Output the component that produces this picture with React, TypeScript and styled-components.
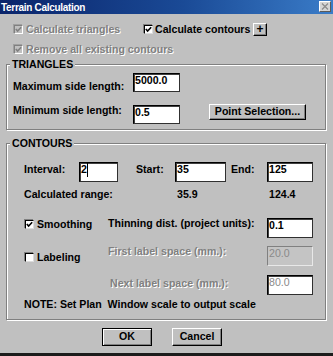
import React from "react";
import styled, { createGlobalStyle } from "styled-components";

const GlobalStyle = createGlobalStyle`
  html, body {
    margin: 0;
    padding: 0;
    background: #c0c0c0;
  }
  body {
    font-family: "Liberation Sans", Arial, sans-serif;
  }
`;

const Window = styled.div`
  width: 333px;
  height: 356px;
  box-sizing: border-box;
  background: #c0c0c0;
  border-bottom: 3px solid #1c1c1c;
  display: flex;
  flex-direction: column;
  font-family: "Liberation Sans", Arial, sans-serif;
  font-size: 10.6px;
  font-weight: bold;
  color: #000;
  overflow: hidden;
`;

const TitleBar = styled.div`
  height: 14px;
  flex: none;
  display: flex;
  align-items: flex-start;
  justify-content: space-between;
  padding: 0 2px 0 1px;
  background: linear-gradient(to right, #0a246a 0%, #1a4a96 55%, #3a7cc8 100%);
`;

const Title = styled.span`
  margin-top: 1px;
  color: #fff;
  font-size: 10px;
  letter-spacing: -0.3px;
  line-height: 14px;
  white-space: nowrap;
`;

const CloseBox = styled.div`
  width: 12px;
  height: 11px;
  margin-top: 1px;
  box-sizing: border-box;
  background: #d6d6d6;
  border: 1px solid;
  border-color: #fff #5a5a5a #5a5a5a #fff;
  display: flex;
  align-items: center;
  justify-content: center;
`;

const Options = styled.div`
  display: flex;
  flex-direction: column;
  gap: 7px;
  padding: 9px 0 0 13px;
`;

const OptionRow = styled.div`
  display: flex;
  align-items: center;
  height: 13px;
`;

const CheckItem = styled.label<{ $w?: number; $gap: number; $dy?: number }>`
  display: flex;
  align-items: center;
  flex: none;
  gap: ${(p) => p.$gap}px;
  width: ${(p) => (p.$w ? `${p.$w}px` : "auto")};
  height: 13px;
  margin-top: ${(p) => p.$dy || 0}px;
  line-height: 13px;
`;

const Box = styled.span<{ $disabled?: boolean }>`
  width: 9px;
  height: 9px;
  margin-left: 1px;
  box-sizing: border-box;
  flex: none;
  display: flex;
  align-items: center;
  justify-content: center;
  background: ${(p) => (p.$disabled ? "#c0c0c0" : "#fff")};
  border: 1px solid;
  border-color: ${(p) =>
    p.$disabled ? "#808080 #fff #fff #808080" : "#000 #dcdcdc #dcdcdc #000"};
  box-shadow: -1px -1px 0 ${(p) => (p.$disabled ? "#a0a0a0" : "#808080")};
`;

const Text = styled.span<{ $disabled?: boolean }>`
  white-space: pre;
  color: ${(p) => (p.$disabled ? "#808080" : "#000")};
  text-shadow: ${(p) => (p.$disabled ? "1px 1px 0 #fff" : "none")};
`;

const Group = styled.fieldset<{ $mt: number; $pad: string }>`
  flex: none;
  min-width: 0;
  margin: ${(p) => p.$mt}px 7px 0 6px;
  padding: ${(p) => p.$pad};
  border: 1px solid #808080;
  box-shadow: inset 1px 1px 0 #fff, 1px 1px 0 #fff;
`;

const Legend = styled.legend`
  padding: 0 2px;
  line-height: 13px;
  background: #c0c0c0;
`;

const FormRow = styled.div<{ $mt?: number; $pl?: number }>`
  display: flex;
  align-items: flex-start;
  margin-top: ${(p) => p.$mt || 0}px;
  padding-left: ${(p) => p.$pl || 0}px;
`;

const Label = styled.span<{ $w?: number; $dy?: number; $ml?: number; $disabled?: boolean }>`
  display: block;
  flex: none;
  width: ${(p) => (p.$w ? `${p.$w}px` : "auto")};
  margin-top: ${(p) => p.$dy || 0}px;
  margin-left: ${(p) => p.$ml || 0}px;
  line-height: 13px;
  white-space: pre;
  color: ${(p) => (p.$disabled ? "#808080" : "#000")};
  text-shadow: ${(p) => (p.$disabled ? "1px 1px 0 #fff" : "none")};
`;

type FieldState = "normal" | "grayed" | "dimmed";

const Field = styled.div<{ $w: number; $h: number; $dy?: number; $state?: FieldState }>`
  flex: none;
  box-sizing: border-box;
  width: ${(p) => p.$w}px;
  height: ${(p) => p.$h}px;
  margin-top: ${(p) => p.$dy || 0}px;
  padding: 0 1px;
  line-height: 12px;
  display: flex;
  align-items: flex-start;
  border: 1px solid;
  border-color: ${(p) =>
    p.$state === "grayed" ? "#808080 #e8e8e8 #e8e8e8 #808080" : "#000 #303030 #303030 #000"};
  box-shadow: ${(p) => (p.$state === "grayed" ? "none" : "inset 1px 1px 0 #404040")};
  background: ${(p) => (p.$state === "grayed" ? "#c4c4c4" : "#fff")};
  color: ${(p) => (p.$state && p.$state !== "normal" ? "#8a8a8a" : "#000")};
  font-weight: ${(p) => (p.$state && p.$state !== "normal" ? "normal" : "bold")};
`;

const Caret = styled.span`
  width: 1px;
  height: 14px;
  background: #000;
`;

const Button = styled.button<{ $w: number; $h: number; $dy?: number; $ml?: number; $default?: boolean }>`
  flex: none;
  box-sizing: border-box;
  width: ${(p) => p.$w}px;
  height: ${(p) => p.$h}px;
  margin: ${(p) => p.$dy || 0}px 0 0 ${(p) => p.$ml || 0}px;
  padding: 0 0 1px;
  font: inherit;
  line-height: 13px;
  color: #000;
  background: #c0c0c0;
  border: 1px solid;
  border-color: ${(p) => (p.$default ? "#000" : "#fff #000 #000 #fff")};
  box-shadow: ${(p) =>
    p.$default
      ? "inset 1px 1px 0 #fff, inset -1px -1px 0 #808080"
      : "inset -1px -1px 0 #808080"};
  cursor: default;
`;

const PlusButton = styled(Button)`
  font-size: 12px;
  line-height: 11px;
  padding: 0;
`;

const ButtonRow = styled.div`
  display: flex;
  gap: 20px;
  padding-left: 102px;
  margin-top: 8px;
`;

const Check = ({ checked, disabled }: { checked?: boolean; disabled?: boolean }) => (
  <Box $disabled={disabled}>
    {checked && (
      <svg width="7" height="7" viewBox="0 0 7 7">
        <polyline
          points="0.8,3 2.6,5 6.2,1.2"
          fill="none"
          stroke={disabled ? "#808080" : "#000"}
          strokeWidth="1.6"
        />
      </svg>
    )}
  </Box>
);

export default function App() {
  return (
    <>
      <GlobalStyle />
      <Window>
        <TitleBar>
          <Title>Terrain Calculation</Title>
          <CloseBox>
            <svg width="8" height="7" viewBox="0 0 8 7">
              <path d="M1 0.5 L7 6.5 M7 0.5 L1 6.5" stroke="#8c8c8c" strokeWidth="1.3" />
            </svg>
          </CloseBox>
        </TitleBar>

        <Options>
          <OptionRow>
            <CheckItem $w={130} $gap={3}>
              <Check checked disabled />
              <Text $disabled>Calculate triangles</Text>
            </CheckItem>
            <CheckItem $w={110} $gap={2}>
              <Check checked />
              <Text>Calculate contours</Text>
            </CheckItem>
            <PlusButton $w={14} $h={13}>+</PlusButton>
          </OptionRow>
          <OptionRow>
            <CheckItem $gap={3}>
              <Check checked disabled />
              <Text $disabled>Remove all existing contours</Text>
            </CheckItem>
          </OptionRow>
        </Options>

        <Group $mt={2} $pad="2px 6px 5px 3px">
          <Legend>TRIANGLES</Legend>
          <FormRow $pl={3}>
            <Label $w={120} $dy={7}>Maximum side length:</Label>
            <Field $w={47} $h={19}>5000.0</Field>
          </FormRow>
          <FormRow $pl={3} $mt={11}>
            <Label $w={120}>Minimum side length:</Label>
            <Field $w={47} $h={19} $dy={1}>0.5</Field>
            <Button $w={97} $h={16} $ml={29}>Point Selection...</Button>
          </FormRow>
        </Group>

        <Group $mt={7} $pad="12px 6px 8px 3px">
          <Legend>CONTOURS</Legend>
          <FormRow $pl={14}>
            <Label $w={55} $dy={1}>Interval:</Label>
            <Field $w={39} $h={20}>
              2<Caret />
            </Field>
            <Label $w={39} $ml={18} $dy={1}>Start:</Label>
            <Field $w={51} $h={20}>35</Field>
            <Label $w={36} $ml={5} $dy={1}>End:</Label>
            <Field $w={46} $h={20}>125</Field>
          </FormRow>
          <FormRow $pl={14} $mt={6}>
            <Label $w={153}>Calculated range:</Label>
            <Label $w={92}>35.9</Label>
            <Label>124.4</Label>
          </FormRow>
          <FormRow $pl={14} $mt={16}>
            <CheckItem $w={84} $gap={3} $dy={1}>
              <Check checked />
              <Text>Smoothing</Text>
            </CheckItem>
            <Label $w={159}>Thinning dist. (project units):</Label>
            <Field $w={46} $h={20} $dy={1}>0.1</Field>
          </FormRow>
          <FormRow $pl={14} $mt={7}>
            <CheckItem $w={84} $gap={3} $dy={6}>
              <Check />
              <Text>Labeling</Text>
            </CheckItem>
            <Label $w={159} $disabled>First label space (mm.):</Label>
            <Field $w={46} $h={20} $dy={1} $state="grayed">20.0</Field>
          </FormRow>
          <FormRow $pl={14} $mt={9}>
            <Label $w={157} $ml={86} $dy={2} $disabled>Next label space (mm.):</Label>
            <Field $w={46} $h={20} $state="dimmed">80.0</Field>
          </FormRow>
          <FormRow $pl={14} $mt={3}>
            <Label>NOTE: Set Plan  Window scale to output scale</Label>
          </FormRow>
        </Group>

        <ButtonRow>
          <Button $w={50} $h={18} $default>OK</Button>
          <Button $w={50} $h={18}>Cancel</Button>
        </ButtonRow>
      </Window>
    </>
  );
}
